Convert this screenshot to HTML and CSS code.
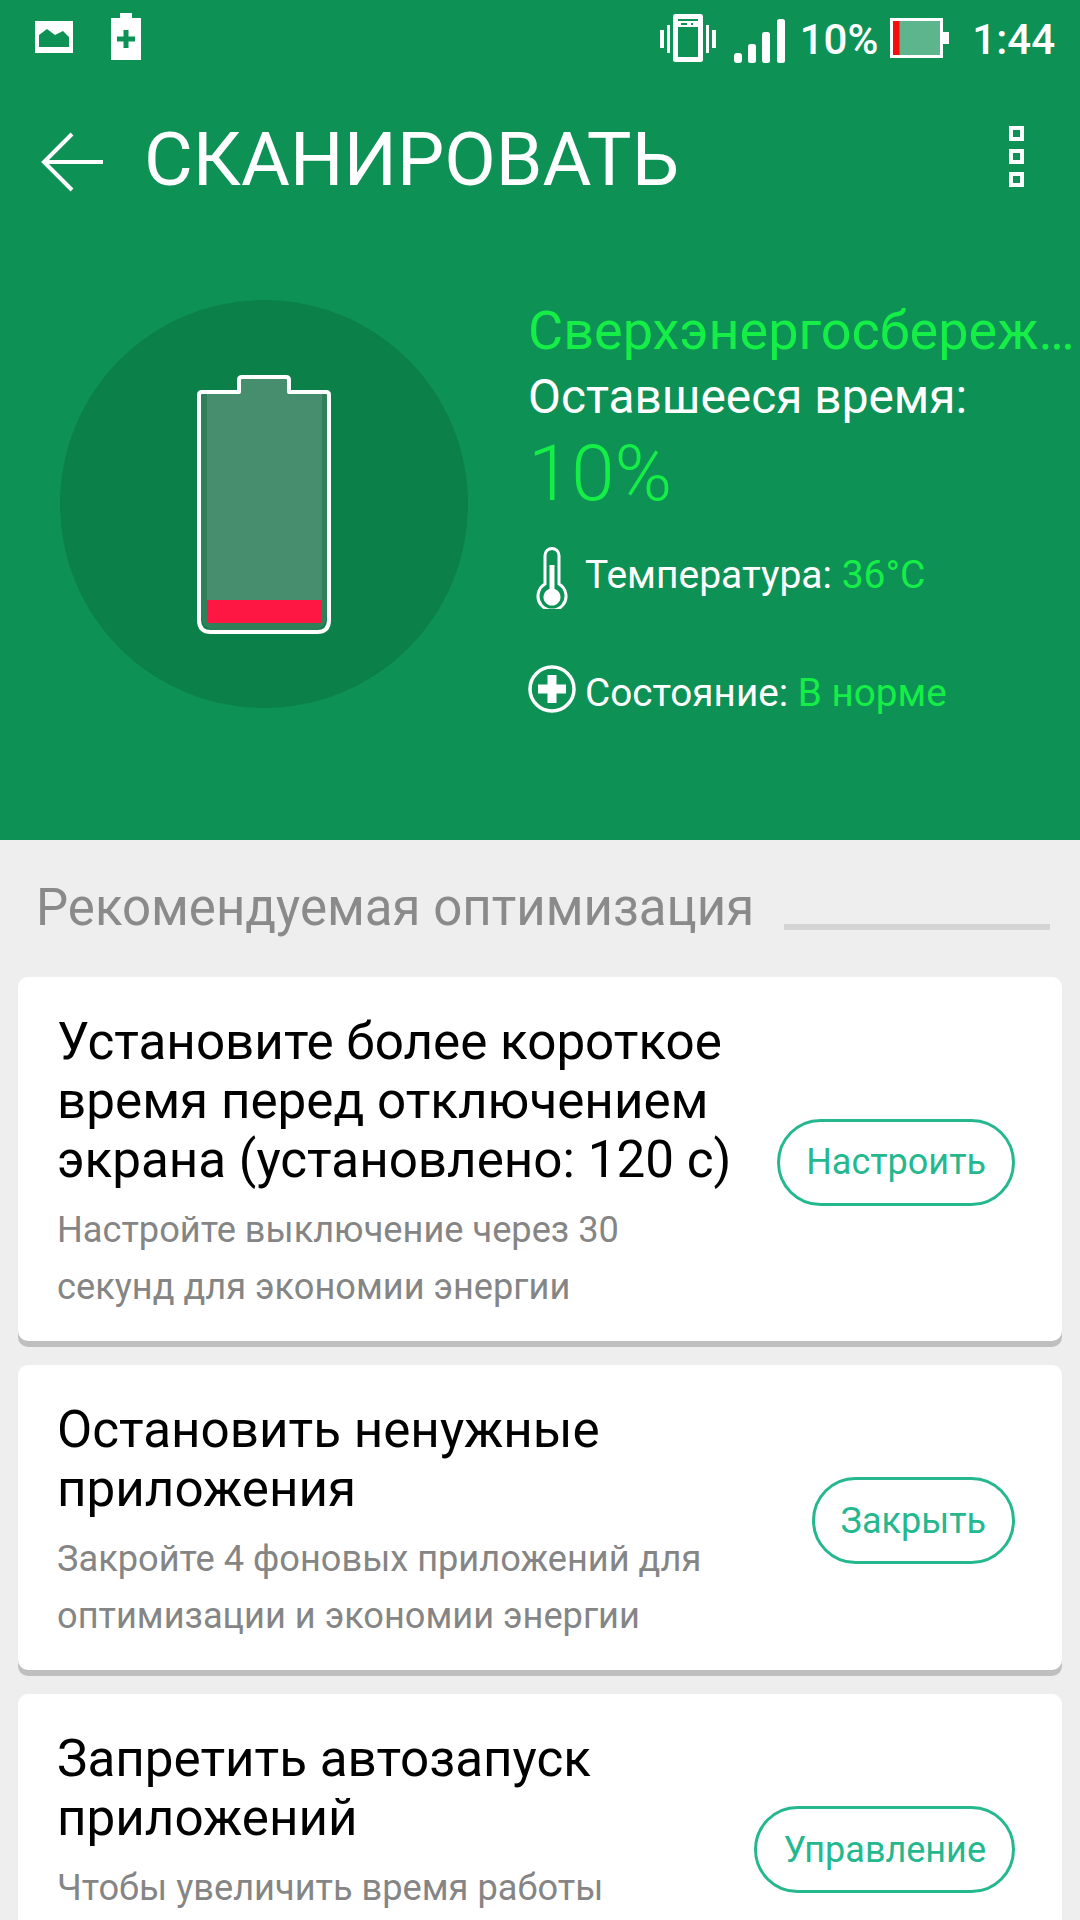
FILE: index.html
```html
<!DOCTYPE html>
<html lang="ru">
<head>
<meta charset="UTF-8" />
<title>Сканировать</title>
<meta name="viewport" content="width=device-width, initial-scale=1" />
<link rel="stylesheet" href="styles.css">
</head>
<body>

<header class="top">
  <div class="statusbar">
    <svg class="ic-image" viewBox="0 0 38 32"><path fill="#fff" fill-rule="evenodd" d="M0 0h38v32H0zM4 14v12h30V16l-6-6-8 4-8-6z"/></svg>
    <svg class="ic-charge" viewBox="0 0 30 47"><path fill="#fff" fill-rule="evenodd" d="M9 0h12v5h9v42H0V5h9zM12.500 17v6.500H6v5h6.500V35h5v-6.500H24v-5h-6.500V17z"/></svg>
    <span class="status-right">
      <svg class="ic-vibrate" viewBox="0 0 56 48">
        <path fill="none" stroke="#fff" stroke-width="5" stroke-linejoin="round" d="M15.500 2.500h25v43h-25z"/>
        <path fill="#fff" fill-rule="evenodd" d="M15 7h26v6H15zM21 9v2h6V9zM31 9v2h2V9z"/>
        <path fill="#fff" d="M0 16h4v18H0zM7 11h3v28H7zM46 11h3v28h-3zM52 16h4v18h-4z"/>
      </svg>
      <svg class="ic-signal" viewBox="0 0 52 44">
        <rect x="0" y="34" width="8" height="10" rx="3" fill="#fff"/>
        <rect x="14" y="25" width="8" height="19" rx="2.500" fill="#fff"/>
        <rect x="28" y="13" width="8" height="31" rx="2.500" fill="#fff"/>
        <rect x="43" y="0" width="8" height="44" rx="2.500" fill="#fff"/>
      </svg>
      <span class="status-pct">10%</span>
      <svg class="ic-battery" viewBox="0 0 60 40">
        <path fill="#fff" d="M53 14h6v12h-6z"/>
        <rect x="1.500" y="1.500" width="50" height="37" fill="#5cb58c" stroke="#fff" stroke-width="3"/>
        <rect x="3" y="3" width="6.500" height="34" fill="#f60d0d"/>
      </svg>
      <span class="status-time">1:44</span>
    </span>
  </div>

  <div class="toolbar">
    <svg class="ic-back" viewBox="0 0 62 60"><path fill="none" stroke="#fff" stroke-width="4" d="M31 2 3 30l28 28M3 30h59"/></svg>
    <h1 class="toolbar-title">СКАНИРОВАТЬ</h1>
    <div class="overflow"><i></i><i></i><i></i></div>
  </div>

  <section class="hero">
    <div class="gauge">
      <svg class="gauge-battery" viewBox="0 0 134 259">
        <path fill="#2f8058" d="M4 17h126v222q0 16-16 16H20q-16 0-16-16z"/>
        <path fill="#468e6e" d="M44 3h46v14h35v209H10V17h34z"/>
        <rect x="10" y="225" width="115" height="23" fill="#ff1744"/>
        <path fill="none" stroke="#fff" stroke-width="4" stroke-linejoin="round" d="M42 17V5q0-3 3-3h44q3 0 3 3v12h37q3 0 3 3v225q0 12-12 12H14q-12 0-12-12V20q0-3 3-3z"/>
      </svg>
    </div>
    <div class="info">
      <div class="info-mode">Сверхэнергосбереж…</div>
      <div class="info-label">Оставшееся время:</div>
      <div class="info-pct">10%</div>
      <div class="info-row row-temp">
        <span class="row-icon">
          <svg class="ic-thermo" viewBox="0 0 32 62">
            <path fill="none" stroke="#fff" stroke-width="3" d="M9 37V8.500a7 7 0 0 1 14 0V37a14 14 0 1 1-14 0z"/>
            <path fill="#fff" d="M13.500 18h5v24a8.500 8.500 0 1 1-5 0z"/>
          </svg>
        </span>
        <span class="row-text">Температура: <em>36°C</em></span>
      </div>
      <div class="info-row row-state">
        <span class="row-icon">
          <svg class="ic-plus" viewBox="0 0 48 48">
            <circle cx="24" cy="24" r="22" fill="none" stroke="#fff" stroke-width="3.500"/>
            <path fill="#fff" d="M19.500 10h9v9.500H38v9h-9.500V38h-9v-9.500H10v-9h9.500z"/>
          </svg>
        </span>
        <span class="row-text">Состояние: <em>В норме</em></span>
      </div>
    </div>
  </section>
</header>

<main class="list">
  <div class="list-head">
    <h2>Рекомендуемая оптимизация</h2>
    <span class="list-rule"></span>
  </div>

  <article class="card">
    <div class="card-text">
      <h3>Установите более короткое<br>время перед отключением<br>экрана (установлено: 120 с)</h3>
      <p>Настройте выключение через 30<br>секунд для экономии энергии</p>
    </div>
    <button class="card-btn" type="button">Настроить</button>
  </article>

  <article class="card">
    <div class="card-text">
      <h3>Остановить ненужные<br>приложения</h3>
      <p>Закройте 4 фоновых приложений для<br>оптимизации и экономии энергии</p>
    </div>
    <button class="card-btn" type="button">Закрыть</button>
  </article>

  <article class="card">
    <div class="card-text">
      <h3>Запретить автозапуск<br>приложений</h3>
      <p>Чтобы увеличить время работы</p>
    </div>
    <button class="card-btn" type="button">Управление</button>
  </article>
</main>

</body>
</html>
```

FILE: styles.css
```css
:root {
  --green: #0d9155;
  --green-dark: #0b8049;
  --lime: #15ee47;
  --teal: #25b88f;
}
* {
  box-sizing: border-box;
}
html, body {
  height: 1920px;
  overflow: hidden;
}
body {
  margin: 0;
  font-family: Roboto, sans-serif;
  background: #eeeeee;
  color: #000;
}
svg {
  display: block;
}
.top {
  background: var(--green);
  color: #fff;
}

/* status bar */
.statusbar {
  height: 72px;
  display: flex;
  align-items: flex-start;
}
.ic-image {
  width: 38px;
  height: 32px;
  margin: 21px 0 0 35px;
}
.ic-charge {
  width: 30px;
  height: 47px;
  margin: 13px 0 0 38px;
}
.status-right {
  margin-left: auto;
  display: flex;
  align-items: flex-start;
  padding-right: 25px;
}
.ic-vibrate {
  width: 56px;
  height: 48px;
  margin-top: 14px;
}
.ic-signal {
  width: 52px;
  height: 44px;
  margin: 19px 0 0 18px;
}
.status-pct,
.status-time {
  font-size: 42px;
  line-height: 42px;
  font-weight: 500;
  margin-top: 19px;
}
.status-pct {
  margin-left: 14px;
}
.status-time {
  margin-left: 22px;
}
.ic-battery {
  width: 60px;
  height: 40px;
  margin: 18px 0 0 12px;
}

/* toolbar */
.toolbar {
  height: 176px;
  display: flex;
  align-items: center;
  padding-left: 41px;
}
.ic-back {
  width: 62px;
  height: 60px;
  margin-top: 3px;
}
.toolbar-title {
  margin: 0 0 2px 41px;
  font-size: 75px;
  font-weight: 400;
  line-height: 80px;
}
.overflow {
  margin: -8px 56px 0 auto;
  display: flex;
  flex-direction: column;
  gap: 8px;
}
.overflow i {
  display: block;
  width: 15px;
  height: 15px;
  border: 4px solid #fff;
}

/* hero */
.hero {
  height: 592px;
  padding: 50px 0 0 60px;
  display: flex;
  align-items: flex-start;
}
.gauge {
  width: 408px;
  height: 408px;
  margin-top: 2px;
  border-radius: 50%;
  background: var(--green-dark);
  flex-shrink: 0;
  display: flex;
  align-items: center;
  justify-content: center;
}
.gauge-battery {
  width: 134px;
  height: 259px;
}
.info {
  margin-left: 60px;
}
.info-mode {
  font-size: 54px;
  line-height: 66px;
  color: var(--lime);
  white-space: nowrap;
}
.info-label {
  font-size: 47.8px;
  line-height: 66px;
}
.info-pct {
  font-size: 78px;
  line-height: 80px;
  font-weight: 300;
  color: var(--lime);
  margin-top: 4px;
}
.info-row {
  display: flex;
  align-items: center;
}
.row-temp {
  height: 62px;
  margin-top: 33px;
}
.row-state {
  height: 48px;
  margin-top: 56px;
}
.row-icon {
  width: 48px;
  display: flex;
  justify-content: center;
  flex-shrink: 0;
  margin-right: 9px;
}
.ic-thermo {
  width: 32px;
  height: 62px;
}
.ic-plus {
  width: 48px;
  height: 48px;
}
.row-text {
  font-size: 38.7px;
  line-height: 44px;
}
.row-temp .row-text {
  font-size: 39px;
  padding-bottom: 6px;
}
.row-state .row-text {
  padding-top: 8px;
}
.row-text em {
  font-style: normal;
  color: var(--lime);
}

/* list */
.list {
  height: 1080px;
  overflow: hidden;
  padding: 38px 18px 0;
}
.list-head {
  display: flex;
  align-items: flex-end;
  height: 60px;
  margin-bottom: 39px;
  padding-left: 18px;
}
.list-head h2 {
  margin: 0;
  font-size: 51px;
  line-height: 60px;
  font-weight: 400;
  color: #8a8a8a;
  white-space: nowrap;
}
.list-rule {
  margin: 0 12px 8px auto;
  width: 266px;
  height: 6px;
  background: #d4d4d4;
}
.card {
  display: flex;
  align-items: center;
  justify-content: space-between;
  min-height: 305px;
  background: #fff;
  border-radius: 10px;
  box-shadow: 0 6px 0 #bfbfbf;
  padding: 35px 47px 26px 39px;
  margin-bottom: 24px;
}
.card-text {
  align-self: flex-start;
}
.card-text h3 {
  margin: 0;
  font-size: 51.2px;
  line-height: 59px;
  font-weight: 400;
  white-space: nowrap;
}
.card-text p {
  margin: 12px 0 0;
  font-size: 36.2px;
  line-height: 57px;
  color: #858585;
  white-space: nowrap;
}
.card-btn {
  height: 87px;
  margin-bottom: 3px;
  padding: 0 26px;
  border: 3px solid var(--teal);
  border-radius: 44px;
  background: #fff;
  color: var(--teal);
  font-family: inherit;
  font-size: 36px;
  flex-shrink: 0;
}
```
